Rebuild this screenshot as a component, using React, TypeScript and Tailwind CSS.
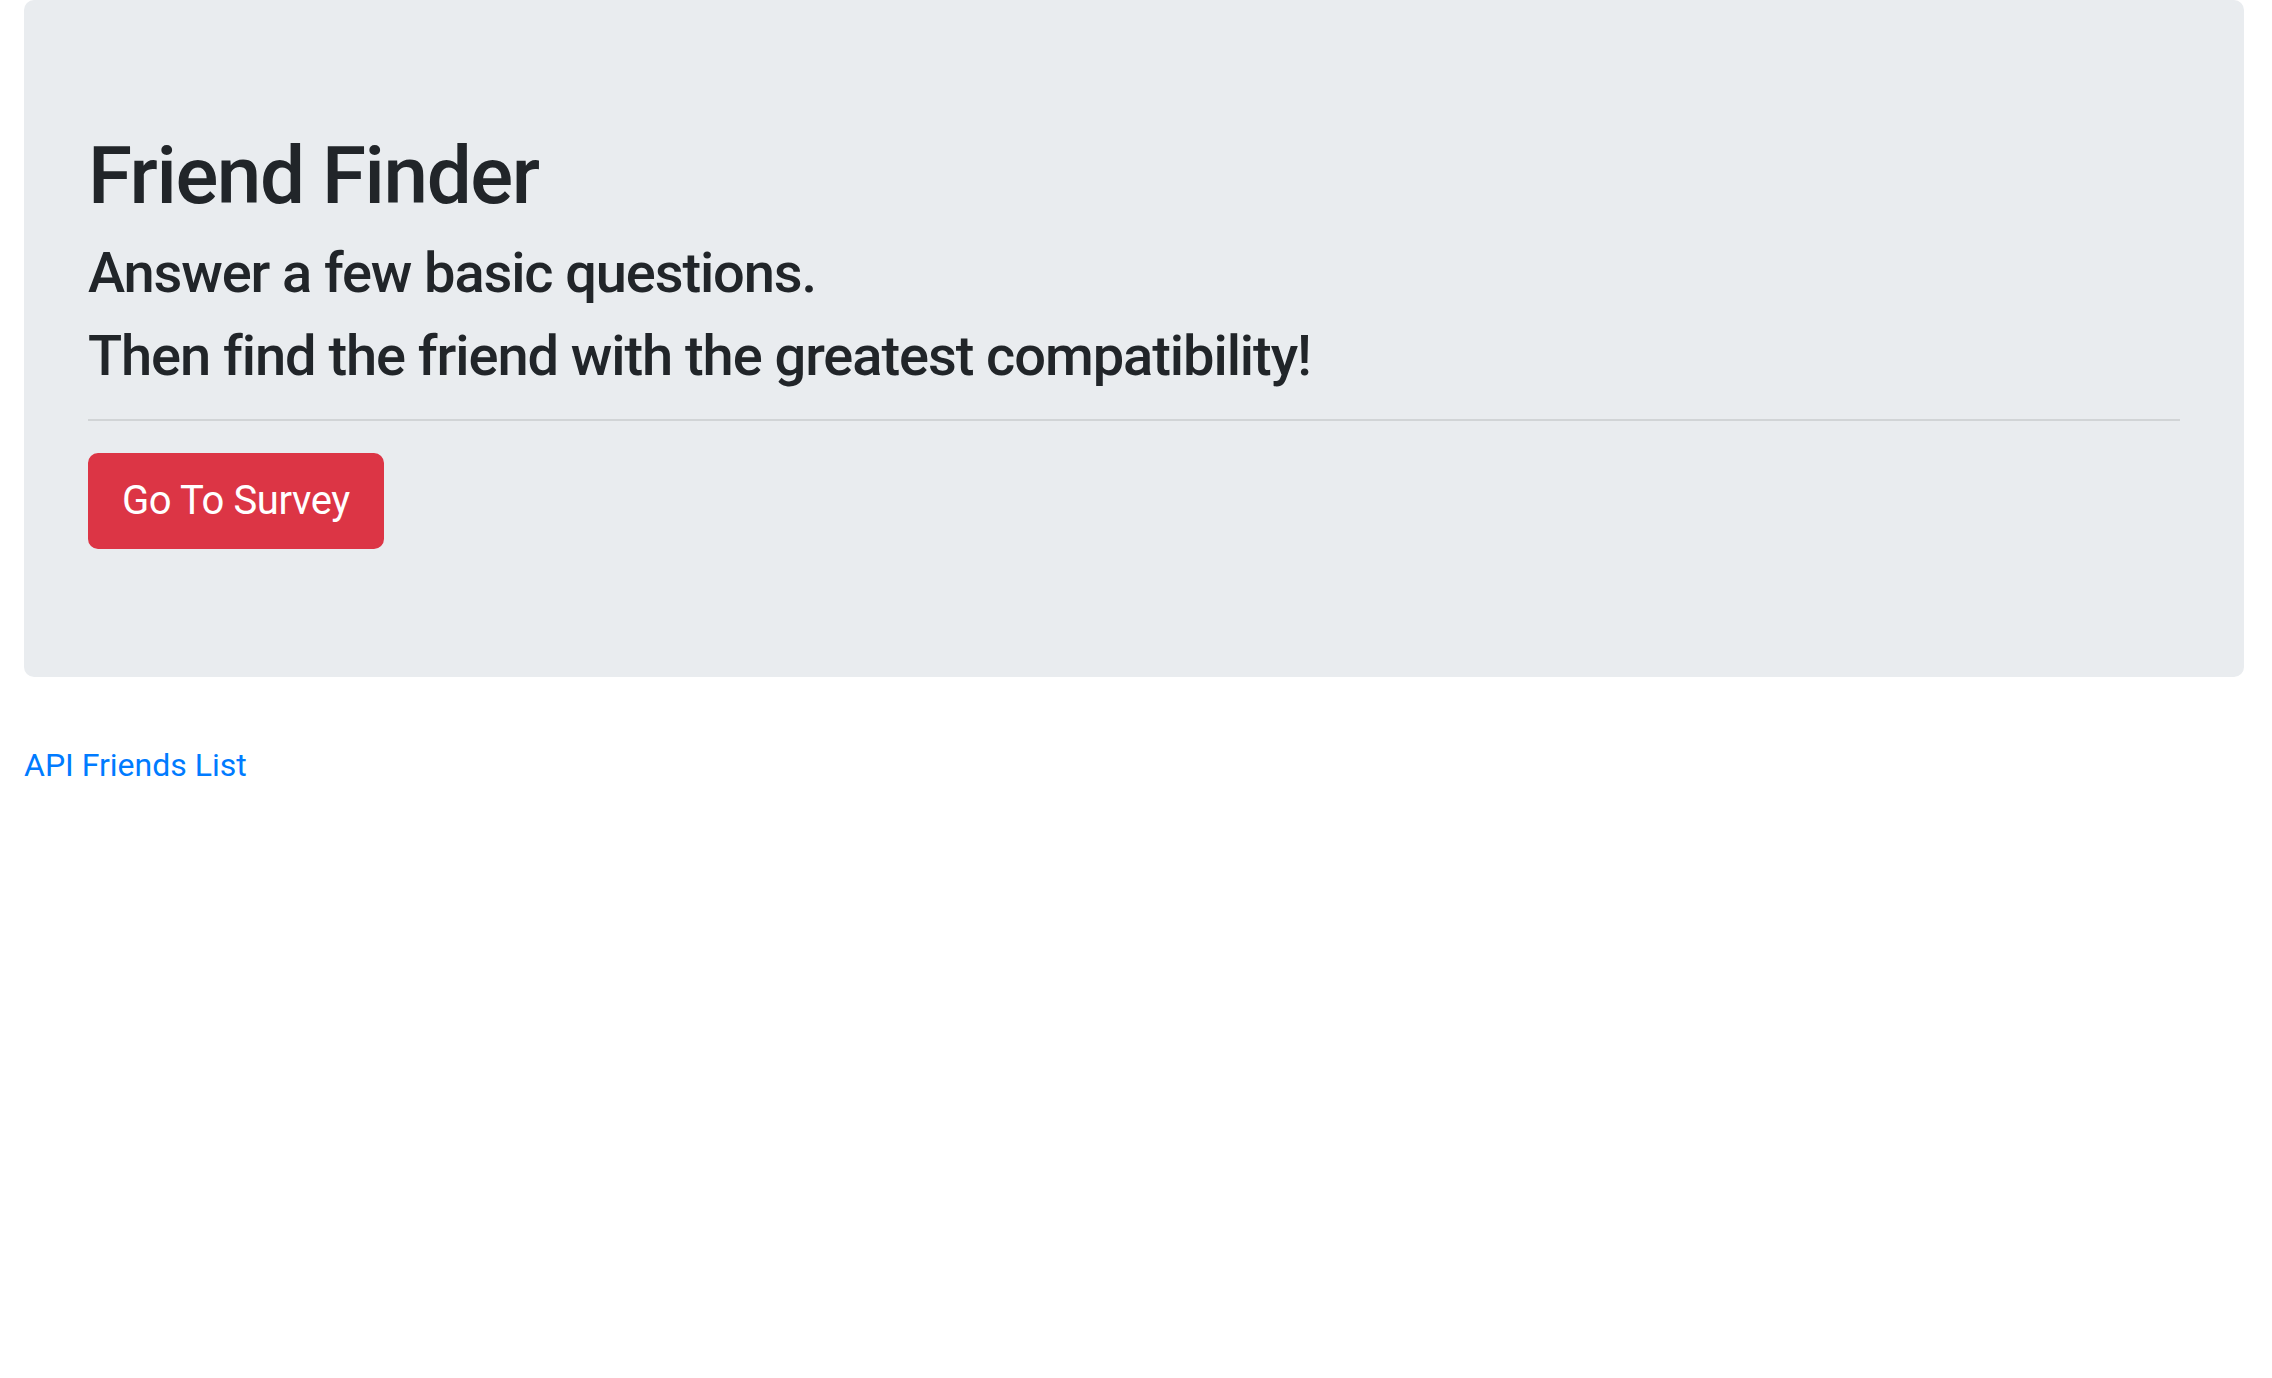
import React from 'react';

const App = () => {
  return (
    <div className="min-h-screen bg-white text-[#212529]" style={{ fontFamily: 'Roboto, "Liberation Sans", sans-serif' }}>
      <div className="ml-6 mr-7 mb-16 rounded-[10px] bg-[#e9ecef] px-16 py-32">
        <h1 className="mb-4 text-[80px] font-medium leading-[1.2] tracking-[-0.018em]">Friend Finder</h1>
        <h3 className="mb-4 text-[56px] font-medium leading-[1.2] tracking-[-0.02em]">Answer a few basic questions.</h3>
        <h3 className="text-[56px] font-medium leading-[1.2] tracking-[-0.019em]">
          Then find the friend with the greatest compatibility!
        </h3>
        <hr className="mt-[29px] mb-8 border-t-2 border-black/10" />
        <a
          href="#survey"
          className="inline-block rounded-[10px] border-2 border-[#dc3545] bg-[#dc3545] px-8 py-4 text-[40px] leading-[1.5] tracking-[-0.01em] text-white"
        >
          Go To Survey
        </a>
      </div>
      <a href="#api" className="ml-6 text-[32px] leading-[1.5] text-[#007bff]">
        API Friends List
      </a>
    </div>
  );
};

export default App;
